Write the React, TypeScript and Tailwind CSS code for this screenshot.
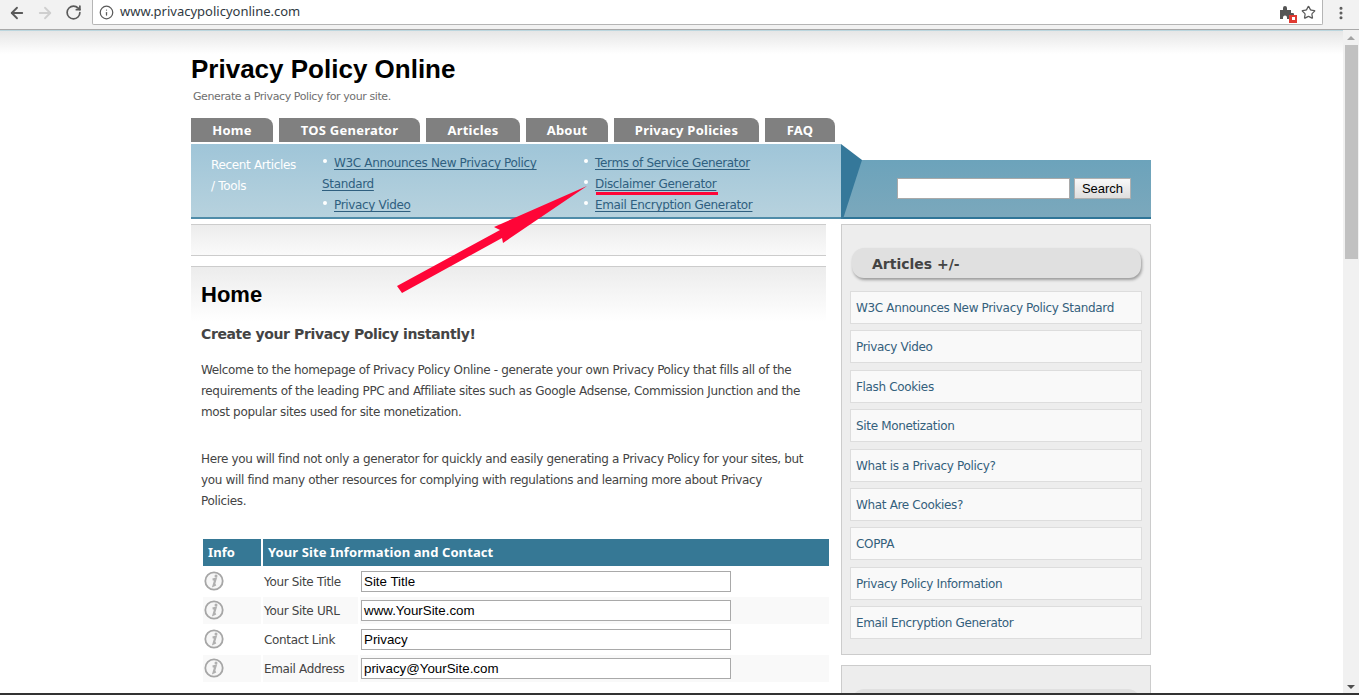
import React from "react";
import { ArrowLeft, ArrowRight, RotateCw, Info, Star, EllipsisVertical } from "lucide-react";

const body = "font-['DejaVu_Sans',sans-serif] text-[12px] tracking-[-0.34px]";

const tabs = [
  { label: "Home", w: "w-[82px]" },
  { label: "TOS Generator", w: "w-[141px]" },
  { label: "Articles", w: "w-[94px]" },
  { label: "About", w: "w-[82px]" },
  { label: "Privacy Policies", w: "w-[145px]" },
  { label: "FAQ", w: "w-[70px]" },
];

const articles = [
  "W3C Announces New Privacy Policy Standard",
  "Privacy Video",
  "Flash Cookies",
  "Site Monetization",
  "What is a Privacy Policy?",
  "What Are Cookies?",
  "COPPA",
  "Privacy Policy Information",
  "Email Encryption Generator",
];

const rows = [
  { label: "Your Site Title", value: "Site Title" },
  { label: "Your Site URL", value: "www.YourSite.com" },
  { label: "Contact Link", value: "Privacy" },
  { label: "Email Address", value: "privacy@YourSite.com" },
];

const InfoIcon = () => (
  <svg width="20" height="20" viewBox="0 0 20 20" className="block mb-[2px]">
    <circle cx="10" cy="10" r="8.7" fill="#f6f6f6" stroke="#a6a6a6" strokeWidth="1.8" />
    <path d="M8.6 8.6 L11.6 7.8 L9.6 14.6 L11.8 13.6" fill="none" stroke="#b0b0b0" strokeWidth="2.2" />
    <circle cx="12" cy="4.9" r="1.5" fill="#b0b0b0" />
  </svg>
);

const Bullet = () => <span className="inline-block w-[4px] h-[4px] rounded-full bg-white align-[4px] mr-[7px] ml-[1px]" />;

const NavLink = ({ children }: { children: React.ReactNode }) => (
  <a className="text-[#2f5f7f] underline underline-offset-2">{children}</a>
);

export default function App() {
  return (
    <div className="relative h-[695px] w-[1359px] overflow-hidden bg-white flex flex-col">
      {/* browser toolbar */}
      <div className="h-[30px] bg-[#f2f2f2] border-b border-[#a9a9a9] flex items-start shrink-0">
        <div className="w-[92px] h-[25px] flex items-center pl-[8px] gap-[8px] text-[#5a5a5a]">
          <ArrowLeft size={18} strokeWidth={2.4} />
          <ArrowRight size={18} strokeWidth={2.4} className="text-[#cfcfcf] ml-[2px]" />
          <RotateCw size={17} strokeWidth={2.4} className="ml-[3px]" />
        </div>
        <div className="w-[1231px] h-[25px] bg-white border-b border-x border-[#b5b5b5] rounded-b-[2px] flex items-center pl-[6px] pr-[6px]">
          <Info size={15} strokeWidth={2} className="text-[#5a5a5a]" />
          <span className="ml-[6px] font-['Noto_Sans',sans-serif] text-[13px] text-[#303942]">www.privacypolicyonline.com</span>
          <div className="ml-auto flex items-center gap-[7px] text-[#5a5a5a]">
            <span className="relative block w-[15px] h-[15px]">
              <svg width="15" height="15" viewBox="0 0 15 15">
                <path d="M1 5h3V3a2 2 0 0 1 4 0v2h4v3h1.5a2 2 0 0 1 0 4H12v2H8v-1.5a2 2 0 0 0-4 0V14H1z" fill="#555" />
              </svg>
              <span className="absolute right-[-3px] bottom-[-3px] w-[8px] h-[8px] bg-[#e03a32] flex items-center justify-center">
                <span className="w-[3px] h-[3px] bg-white" />
              </span>
            </span>
            <Star size={15} strokeWidth={2} />
          </div>
        </div>
        <div className="flex-1 h-[25px] flex items-center justify-center text-[#5a5a5a]">
          <EllipsisVertical size={16} strokeWidth={2.6} />
        </div>
      </div>

      <div className="flex flex-1 min-h-0">
        {/* page */}
        <div className="flex-1 min-w-0 overflow-hidden border-t border-[#bcd6de] bg-[linear-gradient(#e6e6e6,#ffffff_23px)]">
          <div className="w-[960px] ml-[191px]">
            <h1 className="font-['Liberation_Sans',sans-serif] font-bold text-[26px] leading-[32px] text-black mt-[22px]">Privacy Policy Online</h1>
            <p className="font-['DejaVu_Sans',sans-serif] text-[11px] tracking-[-0.4px] text-[#6f6f6f] leading-[16px] ml-[2px] mt-[4px]">Generate a Privacy Policy for your site.</p>

            <div className="flex gap-[6px] mt-[13px] h-[24px]">
              {tabs.map((t) => (
                <div key={t.label} className={`${t.w} bg-[#808080] rounded-tr-[8px] pt-[1px] text-white font-['Noto_Sans',sans-serif] font-bold text-[13px] tracking-[0.25px] flex items-center justify-center`}>
                  {t.label}
                </div>
              ))}
            </div>

            {/* recent articles / search band */}
            <div className="flex mt-[2px] h-[75px]">
              <div className={`${body} w-[650px] bg-gradient-to-b from-[#9fc5d8] to-[#b7d2de] border-b-2 border-[#4f8ca9] flex leading-[21px]`}>
                <div className="w-[131px] pl-[20px] pt-[11px] text-white">
                  Recent Articles<br />/ Tools
                </div>
                <div className="w-[261px] pt-[9px]">
                  <Bullet /><NavLink>W3C Announces New Privacy Policy Standard</NavLink><br />
                  <Bullet /><NavLink>Privacy Video</NavLink>
                </div>
                <div className="pt-[9px]">
                  <Bullet /><NavLink>Terms of Service Generator</NavLink><br />
                  <Bullet /><NavLink>Disclaimer Generator</NavLink><br />
                  <Bullet /><NavLink>Email Encryption Generator</NavLink>
                </div>
              </div>
              <div className="relative w-[310px] flex flex-col">
                <div className="h-[16px]" />
                <div className="flex-1 bg-gradient-to-b from-[#6ca3bb] to-[#7ba8bc] border-b-2 border-[#2f7597] flex items-start justify-end pt-[18px] pr-[20px] gap-[4px]">
                  <div className="w-[173px] h-[21px] bg-white border border-[#a9a9a9]" />
                  <button className="w-[57px] h-[21px] bg-gradient-to-b from-[#f8f8f8] to-[#dedede] border border-[#b0b0b0] font-['Liberation_Sans',sans-serif] text-[13px] leading-[18px] text-black">Search</button>
                </div>
                <svg width="22" height="75" viewBox="0 0 22 75" className="absolute left-0 top-0">
                  <polygon points="0,0 21,16 2,75 0,75" fill="#35789a" />
                </svg>
              </div>
            </div>

            <div className="flex mt-[5px] gap-[15px] items-start">
              {/* main column */}
              <div className="w-[635px] shrink-0">
                <div className="h-[32px] border-y border-[#cccccc] bg-gradient-to-b from-[#ececec] to-[#fafafa]" />
                <div className="mt-[10px] border-t border-[#cccccc] bg-gradient-to-b from-[#ececec] to-white h-[56px] px-[10px] pt-[14px]">
                  <h2 className="font-['Liberation_Sans',sans-serif] font-bold text-[22px] leading-[28px] text-black">Home</h2>
                </div>
                <div className={`${body} pl-[10px] pr-[19px] text-[#444444] leading-[21px]`}>
                  <h3 className="font-bold text-[14px] tracking-[-0.38px] leading-[20px] mt-[2px]">Create your Privacy Policy instantly!</h3>
                  <p className="mt-[16px]">Welcome to the homepage of Privacy Policy Online - generate your own Privacy Policy that fills all of the requirements of the leading PPC and Affiliate sites such as Google Adsense, Commission Junction and the most popular sites used for site monetization.</p>
                  <p className="mt-[26px]">Here you will find not only a generator for quickly and easily generating a Privacy Policy for your sites, but you will find many other resources for complying with regulations and learning more about Privacy Policies.</p>
                </div>
                <table className={`${body} w-[630px] ml-[10px] mt-[25px] border-separate border-spacing-[2px] text-[#444444]`}>
                  <thead>
                    <tr className="h-[27px] bg-[#367895] text-white font-['Noto_Sans',sans-serif] tracking-[0.1px] text-[13px] text-left">
                      <th className="w-[58px] px-[5px] font-bold">Info</th>
                      <th colSpan={2} className="px-[5px] font-bold">Your Site Information and Contact</th>
                    </tr>
                  </thead>
                  <tbody>
                    {rows.map((r, i) => (
                      <tr key={r.label} className={`h-[27px] ${i % 2 === 1 ? "bg-[#f9f9f9]" : ""}`}>
                        <td className="pl-[1px]"><InfoIcon /></td>
                        <td className="w-[95px] pl-[1px]">{r.label}</td>
                        <td className="pl-[1px]">
                          <div className="w-[370px] h-[21px] border border-[#a9a9a9] pl-[2px] bg-white font-['Liberation_Sans',sans-serif] text-[13.33px] tracking-normal leading-[19px] text-black">{r.value}</div>
                        </td>
                      </tr>
                    ))}
                  </tbody>
                </table>
              </div>

              {/* sidebar */}
              <div className={`${body} w-[310px] shrink-0`}>
                <div className="bg-[#ededed] border border-[#cccccc] h-[431px] px-[8px] pt-[23px]">
                  <div className="ml-[2px] w-[289px] h-[30px] bg-[#e0e0e0] rounded-[12px] shadow-[1px_2px_3px_rgba(0,0,0,0.35)] pl-[20px] font-bold text-[14px] tracking-normal leading-[33px] text-[#444444]">Articles +/-</div>
                  <div className="mt-[13px] flex flex-col gap-[6.4px]">
                    {articles.map((a) => (
                      <div key={a} className="h-[33px] bg-[#f9f9f9] border border-[#dddddd] pl-[5px] leading-[33px] text-[#34607c]">{a}</div>
                    ))}
                  </div>
                </div>
                <div className="mt-[10px] bg-[#ededed] border border-[#cccccc] h-[120px] px-[10px] pt-[23px]">
                  <div className="h-[30px] bg-[#e0e0e0] rounded-[12px]" />
                </div>
              </div>
            </div>
          </div>
        </div>

        {/* scrollbar */}
        <div className="w-[16px] bg-[#f1f1f1] border-t border-[#f1f1f1] flex flex-col items-center pb-[4px]">
          <div className="mt-[5px] w-0 h-0 border-x-[4px] border-x-transparent border-b-[4px] border-b-[#a3a3a3]" />
          <div className="mt-[5px] w-[13px] h-[214px] bg-[#c1c1c1]" />
          <div className="mt-auto w-0 h-0 border-x-[4px] border-x-transparent border-t-[4px] border-t-[#505050]" />
        </div>
      </div>

      {/* taskbar edge */}
      <div className="h-[2px] bg-[#333333] shrink-0" />

      {/* red annotation drawn on top of the page */}
      <svg width="1359" height="695" viewBox="0 0 1359 695" className="absolute inset-0 pointer-events-none">
        <polygon points="397,286 500,230 494,227 587,186 503,243 502,238 402,293" fill="#ff0537" />
        <rect x="596" y="192" width="122" height="3" fill="#ff0537" />
      </svg>
    </div>
  );
}
